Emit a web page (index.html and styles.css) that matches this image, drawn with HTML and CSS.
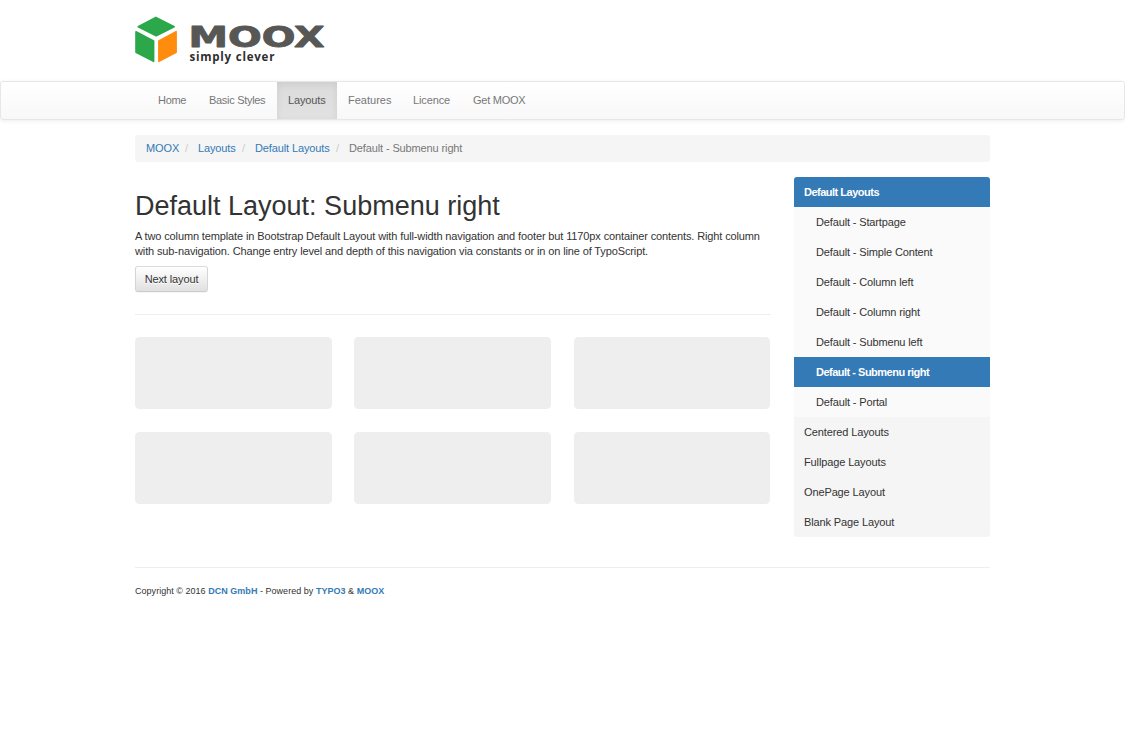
FILE: index.html
```html
<!DOCTYPE html>
<html lang="en">
<head>
<meta charset="utf-8">
<title>Default - Submenu right</title>
<link rel="stylesheet" href="styles.css">
</head>
<body>
<header class="container header">
  <svg class="logo" width="195" height="52" viewBox="0 0 195 52" role="img" aria-label="MOOX simply clever">
    <g stroke-width="1.6" stroke-linejoin="round">
      <path fill="#2ba84a" stroke="#2ba84a" d="M20.8 2.4 39.2 11.7 21.2 20.7 3.2 11.7Z"/>
      <path fill="#2ba84a" stroke="#2ba84a" d="M1 16.7 18.6 25.9V46.4L1 37.2Z"/>
      <path fill="#ff8c0d" stroke="#ff8c0d" d="M23.9 25.9 41.1 16.7V37.2L23.9 46.4Z"/>
    </g>
    <text class="wordmark" x="53.5" y="31.8" textLength="136" lengthAdjust="spacingAndGlyphs">MOOX</text>
    <text class="tagline" x="54.4" y="46.3" textLength="85" lengthAdjust="spacing">simply clever</text>
  </svg>
</header>
<nav class="navbar">
  <div class="container nav-items">
    <a class="n1">Home</a><a class="n2">Basic Styles</a><a class="n3 active">Layouts</a><a class="n4">Features</a><a class="n5">Licence</a><a class="n6">Get MOOX</a>
  </div>
</nav>
<div class="container">
  <div class="breadcrumb">
    <a class="b1">MOOX</a><i>/</i><a class="b2">Layouts</a><i>/</i><a class="b3">Default Layouts</a><i>/</i><span>Default - Submenu right</span>
  </div>
  <div class="columns">
    <main class="main">
      <h1>Default Layout: Submenu right</h1>
      <p>A two column template in Bootstrap Default Layout with full-width navigation and footer but 1170px container contents. Right column<br>with sub-navigation. Change entry level and depth of this navigation via constants or in on line of TypoScript.</p>
      <a class="btn">Next layout</a>
      <hr class="rule">
      <div class="grid">
        <div class="box"></div><div class="box"></div><div class="box"></div>
        <div class="box"></div><div class="box"></div><div class="box"></div>
      </div>
    </main>
    <aside class="menu">
      <a class="selected">Default Layouts</a>
      <a class="sub">Default - Startpage</a>
      <a class="sub">Default - Simple Content</a>
      <a class="sub">Default - Column left</a>
      <a class="sub">Default - Column right</a>
      <a class="sub">Default - Submenu left</a>
      <a class="sub selected">Default - Submenu right</a>
      <a class="sub">Default - Portal</a>
      <a>Centered Layouts</a>
      <a>Fullpage Layouts</a>
      <a>OnePage Layout</a>
      <a>Blank Page Layout</a>
    </aside>
  </div>
  <footer class="footer">Copyright © 2016 <b>DCN GmbH</b> - Powered by <b>TYPO3</b> &amp; <b>MOOX</b></footer>
</div>
</body>
</html>
```
FILE: styles.css
```css
* { box-sizing: border-box; }
body { margin: 0; background: #fff; color: #333; font: 11px/15px "Liberation Sans", Arial, sans-serif; letter-spacing: -.125px; }
.container { width: 855px; margin: 0 auto; }
.header { height: 81px; padding-top: 15px; letter-spacing: 0; }
.logo { display: block; }
.wordmark { font: bold 29px "DejaVu Sans", sans-serif; fill: #575756; stroke: #575756; stroke-width: .9; stroke-linejoin: round; }
.tagline { font: bold 11.5px "Open Sans", sans-serif; fill: #2e2e2d; }

.navbar { height: 39px; border: 1px solid #e7e7e7; border-radius: 3px; background: linear-gradient(#fff, #f8f8f8); box-shadow: 0 1px 4px rgba(0,0,0,.075); }
.nav-items { display: flex; height: 37px; padding-left: 12px; line-height: 37px; color: #777; }
.nav-items a { padding-left: 11px; white-space: nowrap; }
.n1 { width: 51px; letter-spacing: -.3px; }
.n2 { width: 79px; letter-spacing: -.3px; }
.n3 { width: 60px; }
.n4 { width: 65px; letter-spacing: 0; }
.n5 { width: 60px; }
.n6 { letter-spacing: -.25px; }
.active { color: #555; background: linear-gradient(#dbdbdb, #e2e2e2); box-shadow: inset 0 2px 7px rgba(0,0,0,.075); }

.breadcrumb { display: flex; height: 27px; margin-top: 15px; padding-left: 11px; border-radius: 3px; background: #f5f5f5; line-height: 27px; color: #777; white-space: nowrap; }
.breadcrumb a { color: #337ab7; }
.breadcrumb i { width: 13px; color: #ccc; font-style: normal; }
.b1 { width: 39px; }
.b2 { width: 44px; }
.b3 { width: 81px; }

.columns { display: flex; justify-content: space-between; margin-top: 15px; }
.main { width: 636px; }
h1 { margin: 14px 0 8px; font-size: 27px; line-height: 30px; font-weight: 400; letter-spacing: 0; }
p { margin: 0 0 7px; white-space: nowrap; }
.btn { display: block; width: 73px; height: 26px; border: 1px solid #ccc; border-color: #dbdbdb #d5d5d5 #ccc; border-radius: 3px; background: linear-gradient(#fff, #e0e0e0); line-height: 25px; text-align: center; text-shadow: 0 1px 0 #fff; box-shadow: 0 1px 1px rgba(0,0,0,.04); white-space: nowrap; }
.rule { margin: 22px 0 22.4px; border: 0; border-top: 1px solid #eee; }
.grid { display: grid; grid-template-columns: repeat(3, 196.5px); gap: 22.5px 22.75px; }
.box { height: 72px; border-radius: 4.5px; background: #eee; }

.menu { width: 196.5px; border-radius: 3px; overflow: hidden; background: #f5f5f5; }
.menu a { display: block; height: 30px; padding-left: 10.5px; line-height: 30px; white-space: nowrap; }
.menu .sub { padding-left: 22.5px; background: #fafafa; letter-spacing: -.14px; }
.menu .selected { background: #337ab7; color: #fff; font-weight: 700; letter-spacing: -.5px; }
.footer { margin-top: 30px; padding-top: 16px; border-top: 1px solid #eee; font-size: 9px; letter-spacing: .03px; white-space: nowrap; }
.footer b { color: #337ab7; }
```
